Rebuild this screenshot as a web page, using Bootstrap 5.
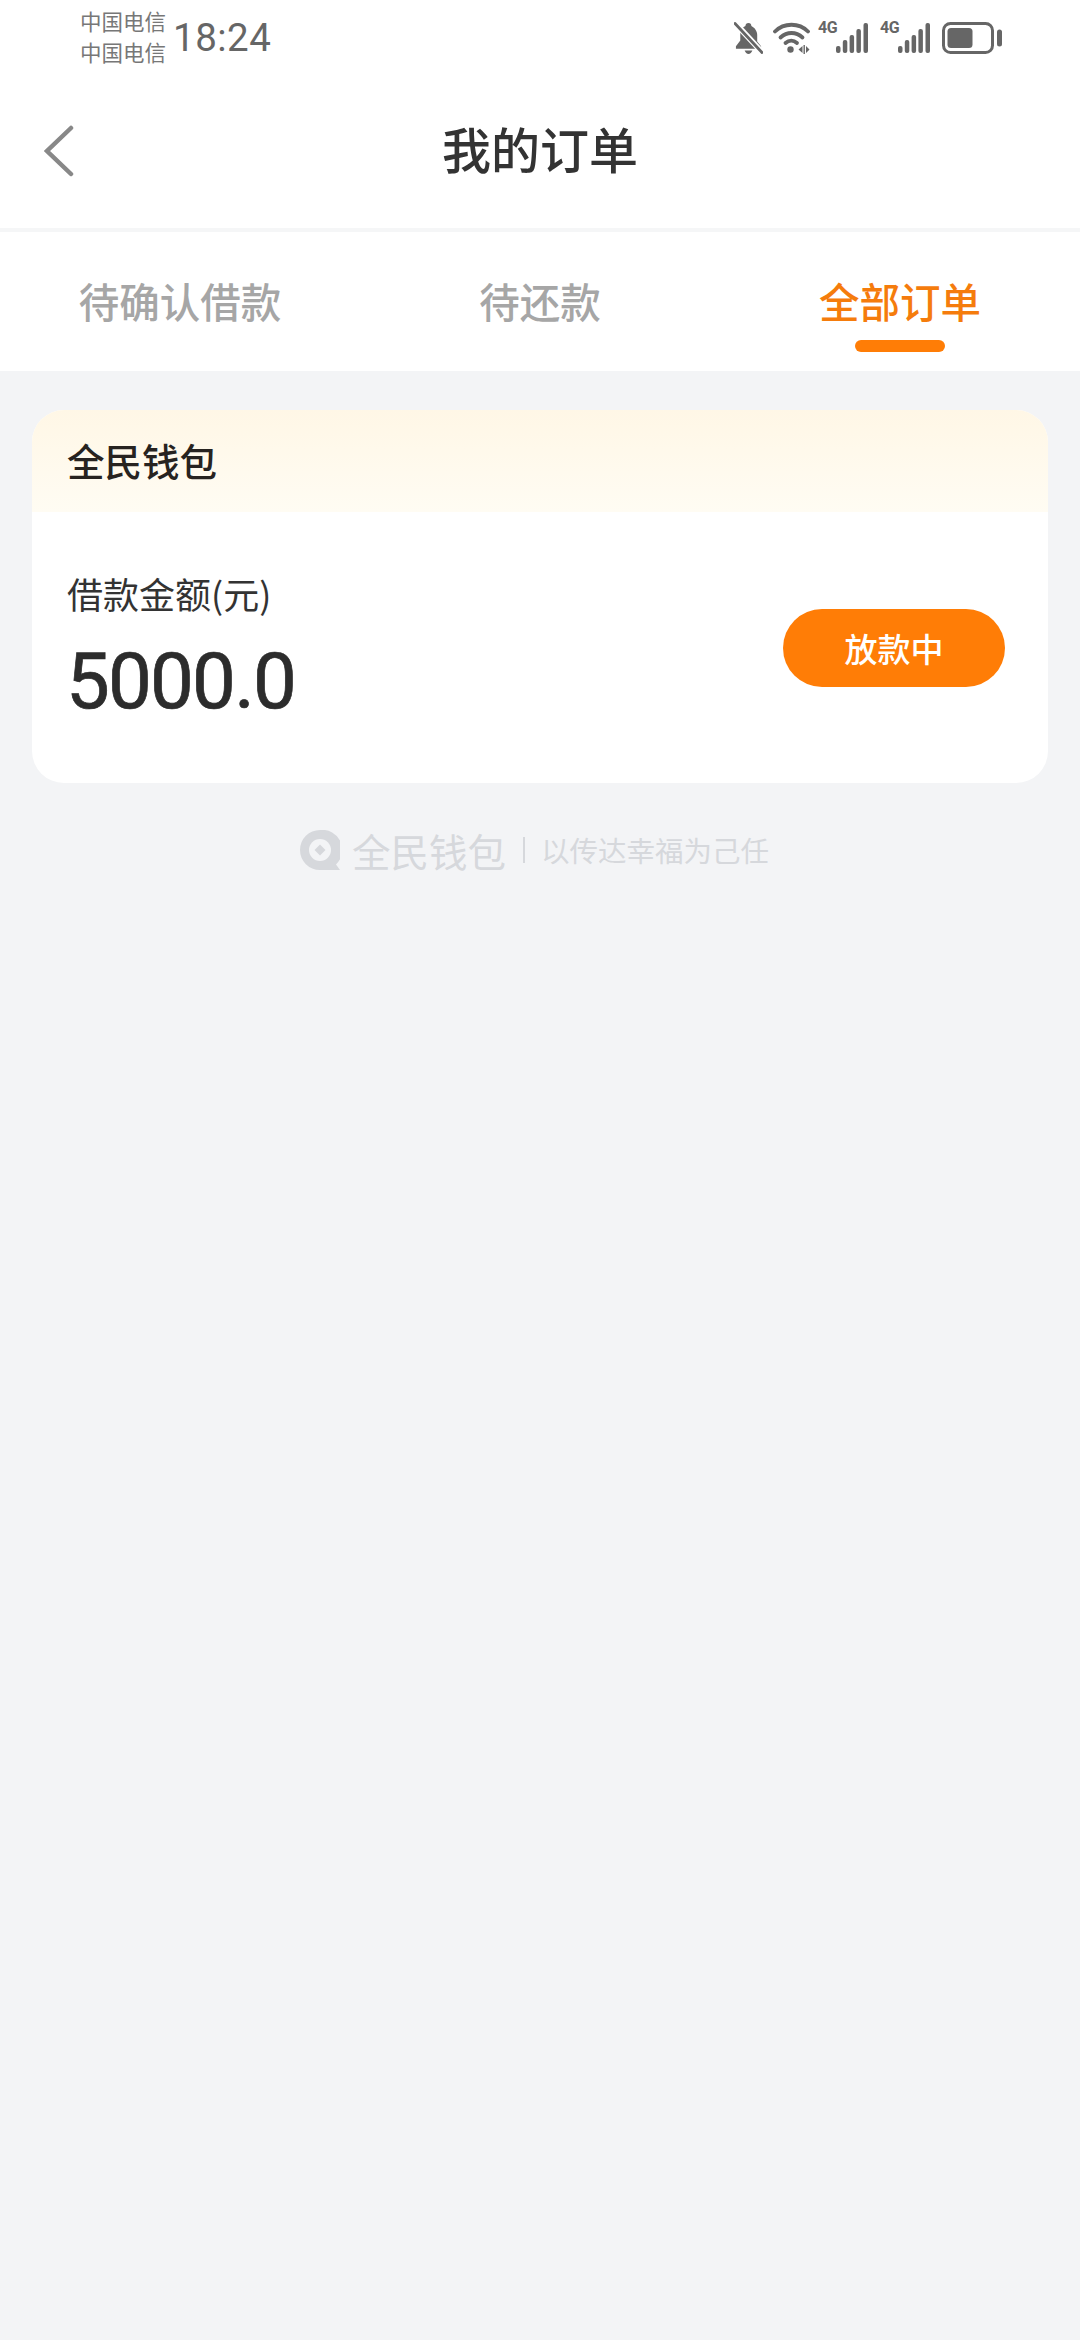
<!DOCTYPE html>
<html lang="zh-CN">
<head>
  <meta charset="UTF-8">
  <title>我的订单</title>
  <link rel="stylesheet" href="https://cdn.jsdelivr.net/npm/bootstrap@5.3.0/dist/css/bootstrap.min.css" />
  <style>
    body {
      width: 1080px;
      height: 2340px;
      background: #f3f4f6;
      font-family: "Noto Sans CJK SC", "Liberation Sans", sans-serif;
      overflow: hidden;
    }
    /* status bar */
    .status-strip { height: 76px; padding: 0 78px 0 80px; background: #fff; color: #666; }
    .carrier-stack { width: 93px; font-size: 21.5px; line-height: 31px; color: #777; margin-top: -4px; }
    .clock-text { font-family: Roboto, sans-serif; font-size: 38.5px; line-height: 1; color: #666; letter-spacing: .5px; }
    .net-label { width: 18px; font-family: Roboto, sans-serif; font-weight: 700; font-size: 16px; line-height: 1; letter-spacing: -.5px; color: #666; margin-top: -20px; }
    .sig-gap { margin-right: 12px; }
    .wifi-gap { margin: 0 8px 0 10px; }
    /* title bar */
    .title-strip { height: 152px; background: #fff; }
    .back-btn { position: absolute; left: 44px; top: 49px; line-height: 0; }
    .page-title { font-size: 49px; line-height: 1; font-weight: 500; color: #333; margin-top: -10px; }
    .title-rule { height: 4px; background: #f5f6f7; }
    /* tabs */
    .tab-strip { height: 139px; background: #fff; }
    .tab-strip .nav-link { position: relative; height: 139px; padding: 39px 0 0; font-size: 40.5px; line-height: 60px; font-weight: 500; color: #a6a6a6; }
    .tab-strip .nav-link.active { color: #f57c0c; }
    .tab-strip .nav-link.active::after {
      content: "";
      position: absolute;
      left: 135px;
      top: 108px;
      width: 90px;
      height: 12px;
      border-radius: 6px;
      background: #ff7d06;
    }
    /* order card */
    .order-card { margin: 39px 32px 0; height: 373px; border: 0; border-radius: 32px; overflow: hidden; background: #fff; }
    .order-card .card-header { height: 102px; padding: 0 35px; border: 0; border-radius: 0; background: linear-gradient(#fff7e6, #fffcf3); font-size: 37.5px; line-height: 100px; font-weight: 500; color: #272320; }
    .order-card .card-body { padding: 57px 43px 0 35px; }
    .amount-label { font-size: 36px; line-height: 48px; color: #333; }
    .amount-value { font-family: Roboto, sans-serif; font-size: 78px; line-height: 88px; font-weight: 400; letter-spacing: -1.8px; color: #2c2c2c; -webkit-text-stroke: .7px #2c2c2c; margin: 21px 0 0 -1px; }
    .status-pill { width: 222px; height: 78px; padding: 0; border: 0; border-radius: 39px; background: #ff7d06; color: #fff; font-size: 33px; line-height: 78px; font-weight: 500; margin-top: 40px; }
    /* brand footer */
    .brand-line { margin-top: 46px; padding-left: 300px; height: 42px; color: #d6d8dc; }
    .brand-name { font-size: 38.5px; line-height: 42px; margin-left: 12px; }
    .brand-rule { width: 2px; height: 26px; background: #d6d8dc; margin: 0 16px 0 17px; }
    .brand-slogan { font-size: 28.5px; line-height: 42px; }
  </style>
</head>
<body>
  <!-- status bar -->
  <div class="status-strip d-flex align-items-center">
    <div class="carrier-stack"><div>中国电信</div><div>中国电信</div></div>
    <div class="clock-text">18:24</div>
    <div class="d-flex align-items-center ms-auto">
      <svg width="29" height="33" viewBox="0 0 30 34" fill="#666">
        <path d="M15 1c-2 0-3 1.200-3.200 3C8 5.500 6.500 9 6.500 13v6L2 25v2.500h26V25l-4-5v-7c0-4-3-7.500-6-9C17.800 2.200 17 1 15 1z"/>
        <path d="M11 29.500h8c-.5 2-2.500 3.500-4 3.500s-3.500-1.500-4-3.500z"/>
        <path d="M3 3l25 27" stroke="#fff" stroke-width="6"/>
        <path d="M1 1.500l28 30" stroke="#666" stroke-width="3" stroke-linecap="round"/>
      </svg>
      <svg width="37" height="32" viewBox="0 0 37 32" fill="none" stroke="#666" stroke-width="3.800" stroke-linecap="round" class="wifi-gap">
        <path d="M2 9.500C11 .5 26 .5 35 9.500"/>
        <path d="M7.500 15.500c6.500-6 15.500-6 22 0"/>
        <path d="M12.500 21c3.500-3 8-3 11.500 0"/>
        <circle cx="17.500" cy="27.500" r="3.200" fill="#666" stroke="none"/>
        <path d="M25.500 27.500l4-3.500v7zM33 24l3.500 3.500-3.500 3.500zM30.500 23h1.400v9h-1.400z" fill="#666" stroke="none"/>
      </svg>
      <span class="net-label">4G</span>
      <svg width="32" height="31" viewBox="0 0 32 31" fill="#666" class="sig-gap">
        <rect x="0" y="23" width="4.500" height="7" rx="2"/><rect x="6.800" y="17" width="4.500" height="13" rx="2"/><rect x="13.600" y="12" width="4.500" height="18" rx="2"/><rect x="20.400" y="6" width="4.500" height="24" rx="2"/><rect x="27.500" y="0" width="4.500" height="30" rx="2"/>
      </svg>
      <span class="net-label">4G</span>
      <svg width="32" height="31" viewBox="0 0 32 31" fill="#666" class="sig-gap">
        <rect x="0" y="23" width="4.500" height="7" rx="2"/><rect x="6.800" y="17" width="4.500" height="13" rx="2"/><rect x="13.600" y="12" width="4.500" height="18" rx="2"/><rect x="20.400" y="6" width="4.500" height="24" rx="2"/><rect x="27.500" y="0" width="4.500" height="30" rx="2"/>
      </svg>
      <svg width="60" height="32" viewBox="0 0 60 32">
        <rect x="1.500" y="1.500" width="49" height="29" rx="7" fill="none" stroke="#666" stroke-width="3"/>
        <rect x="5.500" y="6" width="25" height="20" rx="3.500" fill="#666"/>
        <rect x="55" y="7.500" width="5" height="17" rx="2.500" fill="#666"/>
      </svg>
    </div>
  </div>

  <!-- title bar -->
  <div class="title-strip position-relative d-flex align-items-center justify-content-center">
    <a class="back-btn" href="#">
      <svg width="30" height="52" viewBox="0 0 30 52" fill="none" stroke="#888" stroke-width="4.500" stroke-linecap="round" stroke-linejoin="miter">
        <path d="M27 3L3 26l24 23"/>
      </svg>
    </a>
    <div class="page-title">我的订单</div>
  </div>
  <div class="title-rule"></div>

  <!-- tabs -->
  <ul class="nav nav-justified tab-strip">
    <li class="nav-item"><a class="nav-link" href="#">待确认借款</a></li>
    <li class="nav-item"><a class="nav-link" href="#">待还款</a></li>
    <li class="nav-item"><a class="nav-link active" href="#">全部订单</a></li>
  </ul>

  <!-- order -->
  <div class="card order-card">
    <div class="card-header">全民钱包</div>
    <div class="card-body d-flex justify-content-between align-items-start">
      <div>
        <div class="amount-label">借款金额(元)</div>
        <div class="amount-value">5000.0</div>
      </div>
      <button type="button" class="btn status-pill">放款中</button>
    </div>
  </div>

  <!-- brand -->
  <div class="brand-line d-flex align-items-center">
    <svg width="40" height="40" viewBox="0 0 40 40">
      <path d="M20 0a20 20 0 1 0 0 40h20l-4-5.500A20 20 0 0 0 20 0z" fill="#d6d8dc"/>
      <circle cx="20" cy="20" r="11" fill="#f3f4f6"/>
      <path d="M20 14.500l5.500 5.500-5.500 5.500-5.500-5.500z" fill="#d6d8dc"/>
    </svg>
    <span class="brand-name">全民钱包</span>
    <span class="brand-rule"></span>
    <span class="brand-slogan">以传达幸福为己任</span>
  </div>

  <script src="https://cdn.jsdelivr.net/npm/bootstrap@5.3.0/dist/js/bootstrap.bundle.min.js"></script>
</body>
</html>
